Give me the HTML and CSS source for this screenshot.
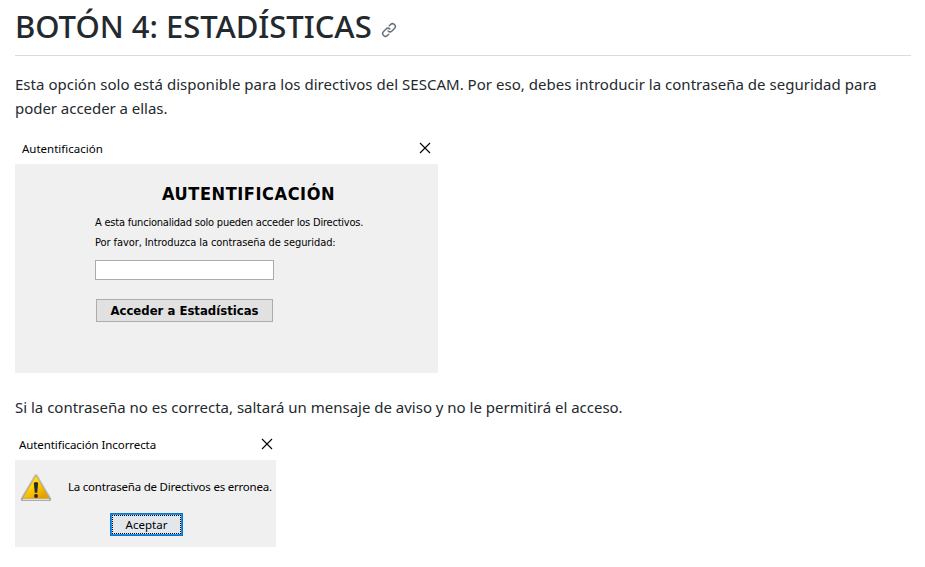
FILE: index.html
```html
<!DOCTYPE html>
<html lang="es">
<head>
<meta charset="utf-8">
<title>Botón 4: Estadísticas</title>
<link rel="stylesheet" href="styles.css">
</head>
<body>
<main>
  <h1><span class="heading-text">BOTÓN 4: ESTADÍSTICAS</span>
    <svg class="anchor" viewBox="0 0 16 16" width="16" height="16"><path d="M7.775 3.275a.75.75 0 0 0 1.06 1.06l1.25-1.25a2 2 0 1 1 2.83 2.83l-2.5 2.5a2 2 0 0 1-2.83 0 .75.75 0 0 0-1.06 1.06 3.5 3.5 0 0 0 4.95 0l2.5-2.5a3.5 3.5 0 0 0-4.95-4.95l-1.25 1.25zm-4.69 9.64a2 2 0 0 1 0-2.83l2.5-2.5a2 2 0 0 1 2.83 0 .75.75 0 0 0 1.06-1.06 3.5 3.5 0 0 0-4.95 0l-2.5 2.5a3.5 3.5 0 0 0 4.95 4.95l1.25-1.25a.75.75 0 0 0-1.06-1.06l-1.25 1.25a2 2 0 0 1-2.83 0z"/></svg>
  </h1>
  <p class="intro"><span class="line-a">Esta opción solo está disponible para los directivos del SESCAM. Por eso, debes introducir la contraseña de seguridad para</span><br><span class="line-b">poder acceder a ellas.</span></p>

  <section class="dialog login">
    <header><span class="title-a">Autentificación</span>
      <svg class="close" width="10" height="10" viewBox="0 0 10 10"><path d="M0 0l10 10M10 0L0 10"/></svg>
    </header>
    <div class="body">
      <h2><span>AUTENTIFICACIÓN</span></h2>
      <p><span class="info-a">A esta funcionalidad solo pueden acceder los Directivos.</span></p>
      <p><span class="info-b">Por favor, Introduzca la contraseña de seguridad:</span></p>
      <input type="password" aria-label="Contraseña">
      <button type="button"><span>Acceder a Estadísticas</span></button>
    </div>
  </section>

  <p class="note"><span class="line-c">Si la contraseña no es correcta, saltará un mensaje de aviso y no le permitirá el acceso.</span></p>

  <section class="dialog alert">
    <header><span class="title-b">Autentificación Incorrecta</span>
      <svg class="close" width="10" height="10" viewBox="0 0 10 10"><path d="M0 0l10 10M10 0L0 10"/></svg>
    </header>
    <div class="body">
      <div class="message">
        <svg class="warning" width="32" height="29" viewBox="0 0 32 29">
          <defs>
            <linearGradient id="gold" x1="0" y1="0" x2="0.7" y2="1"><stop offset="0" stop-color="#fff04a"/><stop offset=".5" stop-color="#ffd40a"/><stop offset="1" stop-color="#e89a00"/></linearGradient>
            <linearGradient id="rim" x1="0" y1="0" x2="0" y2="1"><stop offset="0" stop-color="#c8c8c4"/><stop offset="1" stop-color="#a9abad"/></linearGradient>
          </defs>
          <path d="M14.4 2Q16 0 17.6 2L31 25.2Q31.7 28 29.5 28H2.5Q.3 28 1 25.2Z" fill="url(#rim)"/>
          <path d="M3 26.2H29" stroke="#f5f5f5" stroke-width="1"/>
          <path d="M16 2.6L29 25.3H3Z" fill="url(#gold)" stroke="#d2a520" stroke-width=".7"/>
          <path d="M13.8 10Q16 8 18.2 10L17.2 19.8H14.8Z" fill="#292b2d"/>
          <circle cx="16" cy="23" r="1.9" fill="#242426"/>
        </svg>
        <span class="error">La contraseña de Directivos es erronea.</span>
      </div>
      <button type="button"><span>Aceptar</span></button>
    </div>
  </section>
</main>
</body>
</html>
```

FILE: styles.css
```css
* { box-sizing: border-box; }
body { margin: 0; background: #fff; color: #24292e; font: 15px/24px "Noto Sans", "Segoe UI", sans-serif; }
main { width: 896px; margin-left: 15px; }
h1, h2, p { margin: 0; }
span { white-space: nowrap; }
h1 { display: flex; align-items: center; gap: 9px; height: 56px; padding-bottom: 3px; border-bottom: 1px solid #d8dbdf; font-size: 31px; font-weight: 500; line-height: 40px; }
.heading-text { letter-spacing: -.02px; }
.anchor { flex: none; fill: #6a737d; margin-top: 7px; }
.intro { margin-top: 16px; height: 48px; }
.line-a { letter-spacing: .025px; }
.line-b { letter-spacing: -.04px; }
.line-c { letter-spacing: -.01px; }
.dialog { color: #000; font-size: 11.5px; line-height: 20px; }
.dialog header { display: flex; justify-content: space-between; align-items: center; }
.close { overflow: visible; flex: none; fill: none; stroke: #000; stroke-width: 1.1; margin-bottom: 2px; }
.dialog .body { background: #f0f0f0; }
.login { width: 423px; margin-top: 13px; }
.login header { height: 31px; padding: 0 8px 0 7px; }
.login .body { height: 209px; padding: 18px 0 0 80px; font: 11px/20px "DejaVu Sans Condensed", "DejaVu Sans", Tahoma, sans-serif; }
h2 { height: 31px; padding-left: 67px; font: bold 18px/24px "DejaVu Sans Condensed", "DejaVu Sans", sans-serif; letter-spacing: .57px; }
.info-a { letter-spacing: -.21px; }
.info-b { letter-spacing: -.08px; }
.login input { display: block; width: 179px; height: 20px; margin-top: 7px; padding: 0; border: 1px solid #ababab; background: #fff; }
button { display: flex; align-items: center; justify-content: center; padding: 0; color: #000; background: #e1e1e1; border: 1px solid #adadad; }
.login button { width: 177px; height: 23px; margin: 19px 0 0 1px; font: bold 13px/20px "DejaVu Sans Condensed", "DejaVu Sans", sans-serif; }
.note { margin-top: 22px; height: 24px; }
.alert { width: 261px; margin-top: 8px; }
.alert header { height: 33px; padding: 3px 4px 0 4px; }
.title-b { letter-spacing: -.08px; }
.alert .body { height: 87px; padding-top: 13px; }
.message { display: flex; gap: 16px; height: 29px; padding-left: 5px; }
.warning { flex: none; }
.error { padding-top: 4px; letter-spacing: -.22px; }
.alert button { width: 73px; height: 23px; margin: 11px 0 0 95px; border: 1px solid #0078d7; box-shadow: inset 0 0 0 1px #2a8ddd; background: #e3e7eb; outline: 1px dotted #000; outline-offset: -3px; font: 11.5px/18px "Noto Sans", sans-serif; }
```
